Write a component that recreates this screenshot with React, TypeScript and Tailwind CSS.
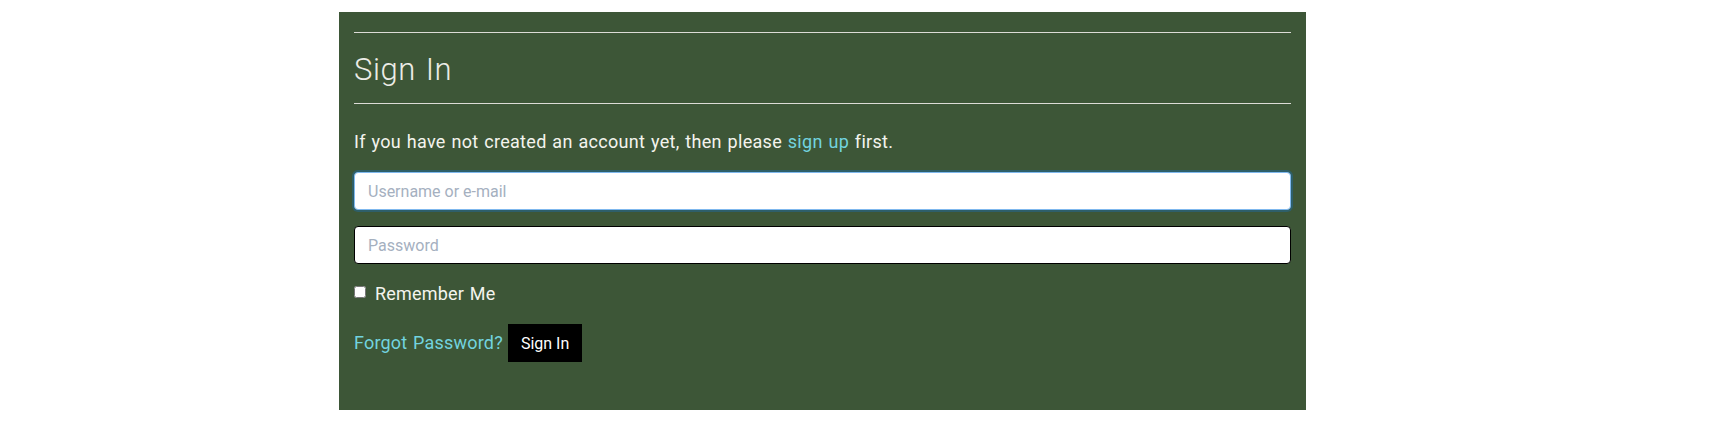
import React from "react";

export default function App() {
  return (
    <div className="min-h-[444px] w-full bg-white pt-[12px]" style={{ fontFamily: "Roboto, 'Noto Sans', sans-serif" }}>
      <div className="ml-[339px] h-[398px] w-[967px] bg-[#3d5637] px-[15px] pt-[20px]">
        <div className="border-t border-[#dcdcd6]" />
        <h1 className="mt-[18px] h-[37px] text-[31px] leading-[37px] font-light text-[#ecece6] tracking-[0.6px] [word-spacing:1.5px]">Sign In</h1>
        <div className="mt-[15px] border-t border-[#dcdcd6]" />
        <p className="mt-[24px] text-[18px] leading-[27px] text-[#f4f4ee] tracking-[0.3px] [word-spacing:1px]">
          If you have not created an account yet, then please{" "}
          <a href="#" className="text-[#72d3df]">sign up</a> first.
        </p>
        <input
          type="text"
          placeholder="Username or e-mail"
          className="mt-[17px] block h-[38px] w-full rounded-[4px] border border-[#7fb8ee] bg-white px-[13px] text-[16px] text-gray-800 outline-none ring-2 ring-[#2e5f69] placeholder:text-[#a5b0bf]"
        />
        <input
          type="password"
          placeholder="Password"
          className="mt-[16px] block h-[38px] w-full rounded-[4px] border border-black bg-white px-[13px] text-[16px] text-gray-800 outline-none placeholder:text-[#a5b0bf]"
        />
        <label className="mt-[16px] flex h-[27px] items-center gap-[9px] text-[18px] leading-[27px] text-[#f4f4ee] tracking-[0.2px] [word-spacing:1px]">
          <input type="checkbox" className="m-0 h-[12px] w-[12px] -translate-y-[2px]" />
          <span>Remember Me</span>
        </label>
        <div className="mt-[17px] flex items-center gap-[5px]">
          <a href="#" className="-translate-y-[1px] text-[18px] leading-[27px] text-[#72d3df] tracking-[0.2px] [word-spacing:1px]">Forgot Password?</a>
          <button className="h-[38px] bg-black px-[13px] pt-[2px] text-[16px] leading-[24px] text-white">Sign In</button>
        </div>
      </div>
    </div>
  );
}
